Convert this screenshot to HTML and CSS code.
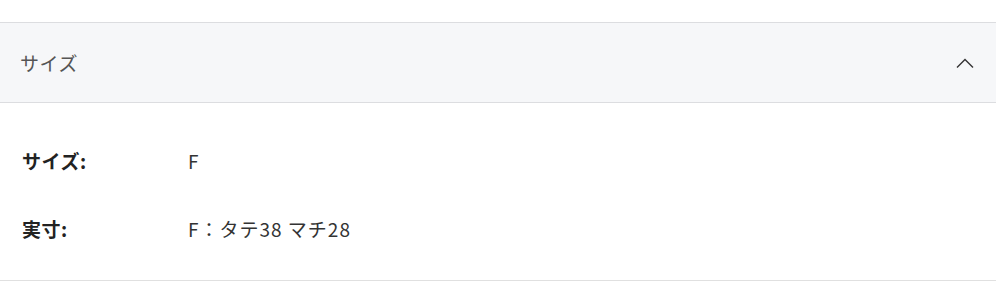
FILE: index.html
```html
<!DOCTYPE html>
<html lang="ja">
<head>
<meta charset="utf-8">
<link rel="stylesheet" href="styles.css">
</head>
<body>
<section class="panel">
  <div class="panel-head">
    <span class="panel-title">サイズ</span>
    <svg class="chevron" width="20" height="12" viewBox="0 0 20 12"><path d="M2 10.5 L10 2.5 L18 10.5" fill="none" stroke="#333" stroke-width="1.4"/></svg>
  </div>
  <dl class="specs">
    <div class="spec-row"><dt>サイズ:</dt><dd>F</dd></div>
    <div class="spec-row"><dt>実寸:</dt><dd>F：タテ38 マチ28</dd></div>
  </dl>
</section>
</body>
</html>
```
FILE: styles.css
```css
html, body { margin: 0; padding: 0; background: #fff; }
body {
  font-family: "Noto Sans CJK JP", "Noto Sans", sans-serif;
  color: #333;
}
.panel {
  width: 996px;
  margin-top: 22px;
  border-bottom: 1px solid #e0e0e0;
}
.panel-head {
  display: flex;
  align-items: center;
  justify-content: space-between;
  height: 79px;
  padding: 0 20px;
  background: #f6f7f9;
  border-top: 1px solid #dcdde0;
  border-bottom: 1px solid #dcdde0;
}
.panel-title { font-size: 19px; color: #555; letter-spacing: 0.5px; }
.chevron { margin-right: 1px; }
.specs { margin: 0; padding: 23px 0 18px 22px; }
.spec-row {
  display: flex;
  align-items: center;
  height: 68px;
}
.spec-row dt {
  width: 166px;
  font-weight: bold;
  font-size: 19px;
  color: #222;
  letter-spacing: 0.5px;
}
.spec-row dd { margin: 0; font-size: 19px; color: #333; letter-spacing: 1px; }
```
